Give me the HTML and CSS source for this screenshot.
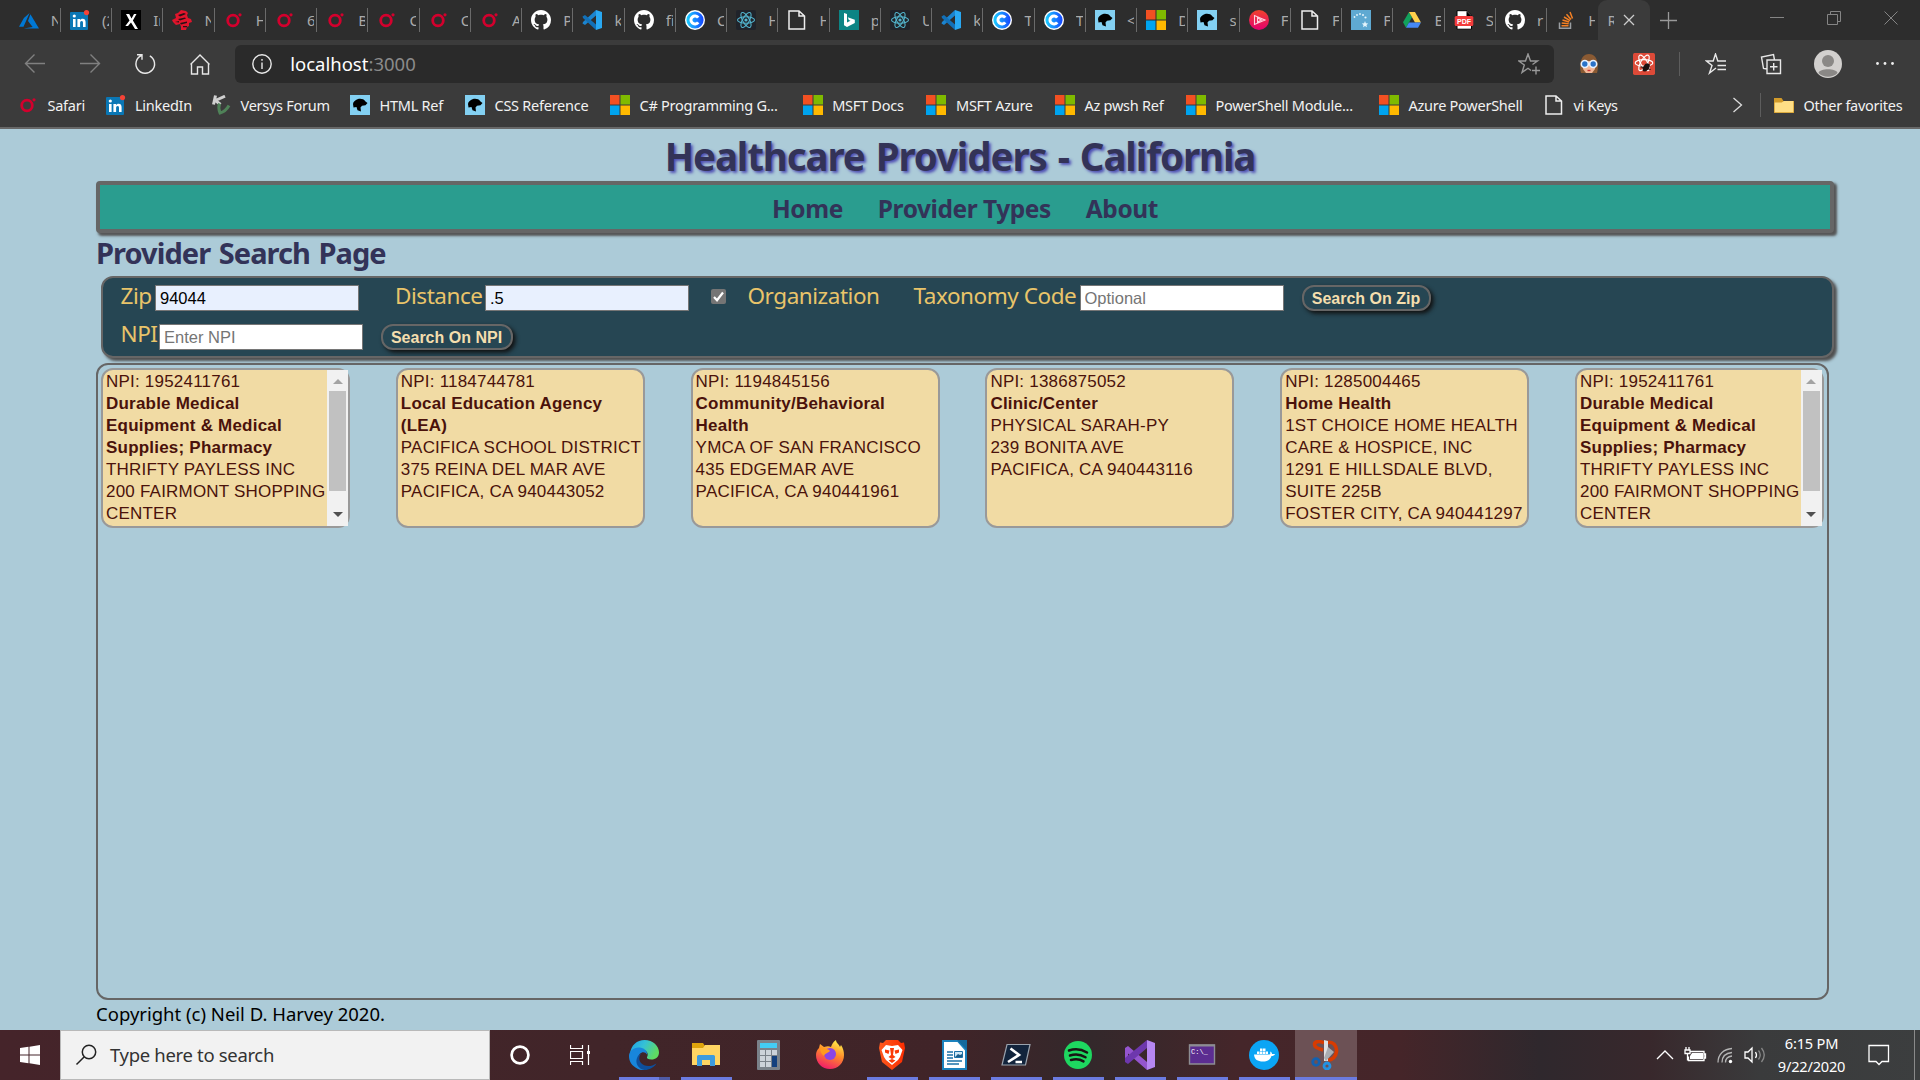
FILE: index.html
```html
<!DOCTYPE html>
<html lang="en">
<head>
<meta charset="utf-8">
<title>Healthcare Providers - California</title>
<link rel="stylesheet" href="styles.css">
</head>
<body>
<svg class="defs" aria-hidden="true">
  <defs>
    <linearGradient id="gc" x1="0" x2="1"><stop offset="0" stop-color="#1bd0ff"/><stop offset="1" stop-color="#1646ff"/></linearGradient>
    <linearGradient id="gp" x1="0" y1="0" x2="0" y2="1"><stop offset="0" stop-color="#f0432c"/><stop offset="1" stop-color="#e3006f"/></linearGradient>
    <linearGradient id="ge" x1="0" y1="0" x2="1" y2=".4"><stop offset="0" stop-color="#1c9ee8"/><stop offset=".5" stop-color="#35c1d6"/><stop offset="1" stop-color="#5fdb62"/></linearGradient>
    <linearGradient id="gf" x1=".7" y1="0" x2=".3" y2="1"><stop offset="0" stop-color="#fff04a"/><stop offset=".45" stop-color="#ff8a2a"/><stop offset="1" stop-color="#f0186c"/></linearGradient>
    <linearGradient id="gb" x1="0" x2="1"><stop offset="0" stop-color="#ff5a1e"/><stop offset="1" stop-color="#fb2c00"/></linearGradient>
  </defs>
  <symbol id="azure" viewBox="0 0 20 20"><path d="M10.6 3 4.9 7.9 0 16.8h4.5zM11.4 4.2 9 11.1l4.6 5.8-8.900 1.500H20z" fill="#0078d4"/></symbol>
  <symbol id="linkedin" viewBox="0 0 20 20"><rect y="2" width="18" height="18" rx="1" fill="#0a77b5"/><g fill="#fff"><rect x="3" y="9" width="2.600" height="8"/><circle cx="4.300" cy="6" r="1.600"/><path d="M7.400 9H10v1.200c.5-.8 1.400-1.400 2.600-1.400 2.300 0 3 1.500 3 3.700V17H13v-4c0-1.200-.3-2-1.300-2-1.100 0-1.600.8-1.600 2v4H7.400z"/></g><circle cx="16.500" cy="2.600" r="2.600" fill="#f44336"/></symbol>
  <symbol id="xk" viewBox="0 0 20 20"><path fill="#000" d="M0 0h20v20H0z"/><path d="M5 4h3.200l2.300 4.500L13 4h2.500l-3.600 6.500L17 19h-3l-4-6.500L7 16H4.300l4.200-5.500z" fill="#fff"/></symbol>
  <symbol id="redfig" viewBox="0 0 20 20"><path d="M3 4l3-1 3-3 5 1 2 2-1 2 1 3 3 1 1 3-3 1v3l-2 1-1 3H9v-3l-1-3-4 1-3-3-1-2 4-2z" fill="#e0152c"/><path d="M6 5l6-2 2 1-6 2.500zM6 9l7-1.500 1 1-6 2zM3 12l4-1v1.500zM8 13l7-1.500v1.500l-6 1.500zM11 16h4v1.300h-4z" fill="#2a1014"/></symbol>
  <symbol id="oreilly" viewBox="0 0 20 20"><circle cx="9" cy="10.500" r="5.300" fill="none" stroke="#d3002d" stroke-width="2.800"/><circle cx="16" cy="4.800" r="1.600" fill="#d3002d"/></symbol>
  <symbol id="github" viewBox="0 0 16 16"><path fill="#fff" d="M8 0C3.580 0 0 3.580 0 8c0 3.540 2.290 6.530 5.470 7.590.4.070.55-.17.55-.38 0-.19-.01-.82-.01-1.490-2.010.37-2.530-.49-2.690-.94-.09-.23-.48-.94-.82-1.130-.28-.15-.68-.52-.01-.53.63-.01 1.080.58 1.230.82.72 1.210 1.870.87 2.330.66.07-.52.28-.87.51-1.070-1.780-.2-3.640-.89-3.640-3.950 0-.87.31-1.590.82-2.150-.08-.2-.36-1.020.08-2.120 0 0 .67-.21 2.200.82.64-.18 1.320-.27 2-.27s1.360.09 2 .27c1.530-1.040 2.200-.82 2.200-.82.44 1.100.16 1.920.08 2.120.51.56.82 1.270.82 2.150 0 3.070-1.870 3.750-3.650 3.950.29.25.54.73.54 1.480 0 1.070-.01 1.930-.01 2.200 0 .21.15.46.55.38A8.010 8.010 0 0 0 16 8c0-4.420-3.580-8-8-8z"/></symbol>
  <symbol id="vscode" viewBox="0 0 20 20"><path d="M14 0l6 2v16l-6 2z" fill="#29a8f2"/><path d="M14 0v5.500L3 15l-2.500-1.500L1 12z" fill="#1b84cf"/><path d="M14 20v-5.500L3 5 .500 6.500 1 8z" fill="#1270b8"/></symbol>
  <symbol id="cc" viewBox="0 0 20 20"><circle cx="10" cy="10" r="10" fill="#fff"/><circle cx="10" cy="10" r="8.600" fill="url(#gc)"/><path d="M13.200 7.700A4 4 0 1 0 13.200 12.300" fill="none" stroke="#fff" stroke-width="3"/></symbol>
  <symbol id="react" viewBox="0 0 20 20"><rect width="20" height="20" rx="2" fill="#20232a"/><g fill="none" stroke="#53b5cf" stroke-width="1.100"><ellipse cx="10" cy="10" rx="8.500" ry="3.300"/><ellipse cx="10" cy="10" rx="8.500" ry="3.300" transform="rotate(60 10 10)"/><ellipse cx="10" cy="10" rx="8.500" ry="3.300" transform="rotate(120 10 10)"/></g><circle cx="10" cy="10" r="1.600" fill="#53b5cf"/></symbol>
  <symbol id="doc" viewBox="0 0 20 20"><path d="M2 1h10l5.500 5v13H2zM12 1v5h5.500" fill="none" stroke="#eee" stroke-width="1.500"/></symbol>
  <symbol id="bing" viewBox="0 0 20 20"><path fill="#0c8484" d="M0 0h20v20H0z"/><path d="M5 3l3 1v8.500l3.500-1.800-1.700-.8-1-2.700 7 2.500v3.200L8 17l-3-1.800z" fill="#fff"/></symbol>
  <symbol id="mdn" viewBox="0 0 20 20"><path fill="#83d0f2" d="M0 0h20v20H0z"/><path d="M3 9c0-2 2-4 5-5 3-.5 6 0 7.500 2.500L17.500 8l-2 2.300-3.500.4-1.500 1.800.5 4-3.500-1.300L6.500 12l-3 .5z" fill="#000"/></symbol>
  <symbol id="ms" viewBox="0 0 20 20"><path fill="#f25022" d="M0 0h9.500v9.500H0z"/><path fill="#7fba00" d="M10.500 0H20v9.500h-9.500z"/><path fill="#00a4ef" d="M0 10.500h9.500V20H0z"/><path fill="#ffb900" d="M10.500 10.500H20V20h-9.500z"/></symbol>
  <symbol id="play" viewBox="0 0 20 20"><circle cx="10" cy="10" r="10" fill="url(#gp)"/><path d="M5.500 5.500v9L16 10zM8.500 8v4l4-2z" fill="none" stroke="#ffd3df" stroke-width="1.100"/></symbol>
  <symbol id="stars" viewBox="0 0 20 20"><path fill="#5fa9d2" d="M0 0h20v20H0z"/><g fill="#e3f3fb"><circle cx="3.500" cy="7" r=".9"/><circle cx="6" cy="5" r=".9"/><circle cx="9" cy="4" r=".9"/><circle cx="12" cy="5" r="1"/><circle cx="14.500" cy="7.500" r="1.100"/><path d="M14 11l.9 2.200 2.300.2-1.700 1.500.5 2.300-2-1.200-2 1.200.5-2.300-1.700-1.500 2.300-.2z"/></g></symbol>
  <symbol id="drive" viewBox="0 0 20 20"><path d="M7 2 10 7.200 4 17.700 1 12.300z" fill="#12a15c"/><path d="M7 2h6l6 10.500h-6z" fill="#ffd04b"/><path d="M7 12.500h12l-3 5.300H4z" fill="#4688f4"/></symbol>
  <symbol id="pdf" viewBox="0 0 20 20"><path d="M3 .7h10l4.500 4.500v14H3z" fill="#fff" stroke="#000"/><path d="M12.500 1v5h5z"/><rect x=".7" y="6" width="18.600" height="10" rx="1.500" fill="#f23b3b"/><text x="10" y="13.800" text-anchor="middle" class="pdf-label">PDF</text></symbol>
  <symbol id="so" viewBox="0 0 20 20"><path d="M3.500 12.500v5.800h11v-5.800" fill="none" stroke="#9a9ea2" stroke-width="1.500"/><path d="M5.500 15.700h7M5.700 13l7 .8M6.500 10l6.700 2M8 7l6 3.600M10.500 4.300l4.500 5.200M14 2l2.500 6.500" stroke="#f48024" stroke-width="1.500"/></symbol>
  <symbol id="versys" viewBox="0 0 20 20"><path d="M4.500.5 2.500 9.500M14 1.200 4.500 5.500 9.500 9.500" fill="none" stroke="#d0d0d0" stroke-width="3"/><path d="M8.500 8.500c-1 3-1 6 .5 9.500C13 17 16 14 18 10.500" fill="none" stroke="#4f8258" stroke-width="3"/></symbol>
  <symbol id="folder" viewBox="0 0 20 20"><path d="M0 3h7.500l2 3H20v12H0z" fill="#d29b2a"/><path d="M.7 7.500h7L10 6h9.300v11.200H.7z" fill="#ffdf86"/></symbol>
</svg>

<header class="browser">
  <div class="tabs">
    <div class="tab"><svg><use href="#azure"/></svg><span>N</span></div>
    <div class="tab"><svg><use href="#linkedin"/></svg><span>(2</span></div>
    <div class="tab"><svg><use href="#xk"/></svg><span>In</span></div>
    <div class="tab"><svg><use href="#redfig"/></svg><span>N</span></div>
    <div class="tab"><svg><use href="#oreilly"/></svg><span>H</span></div>
    <div class="tab"><svg><use href="#oreilly"/></svg><span>6</span></div>
    <div class="tab"><svg><use href="#oreilly"/></svg><span>B</span></div>
    <div class="tab"><svg><use href="#oreilly"/></svg><span>C</span></div>
    <div class="tab"><svg><use href="#oreilly"/></svg><span>C</span></div>
    <div class="tab"><svg><use href="#oreilly"/></svg><span>A</span></div>
    <div class="tab"><svg><use href="#github"/></svg><span>P</span></div>
    <div class="tab"><svg><use href="#vscode"/></svg><span>k</span></div>
    <div class="tab"><svg><use href="#github"/></svg><span>fi</span></div>
    <div class="tab"><svg><use href="#cc"/></svg><span>C</span></div>
    <div class="tab"><svg><use href="#react"/></svg><span>H</span></div>
    <div class="tab"><svg><use href="#doc"/></svg><span>H</span></div>
    <div class="tab"><svg><use href="#bing"/></svg><span>p</span></div>
    <div class="tab"><svg><use href="#react"/></svg><span>U</span></div>
    <div class="tab"><svg><use href="#vscode"/></svg><span>k</span></div>
    <div class="tab"><svg><use href="#cc"/></svg><span>T</span></div>
    <div class="tab"><svg><use href="#cc"/></svg><span>T</span></div>
    <div class="tab"><svg><use href="#mdn"/></svg><span>&lt;</span></div>
    <div class="tab"><svg><use href="#ms"/></svg><span>D</span></div>
    <div class="tab"><svg><use href="#mdn"/></svg><span>s</span></div>
    <div class="tab"><svg><use href="#play"/></svg><span>F</span></div>
    <div class="tab"><svg><use href="#doc"/></svg><span>F</span></div>
    <div class="tab"><svg><use href="#stars"/></svg><span>F</span></div>
    <div class="tab"><svg><use href="#drive"/></svg><span>E</span></div>
    <div class="tab"><svg><use href="#pdf"/></svg><span>S</span></div>
    <div class="tab"><svg><use href="#github"/></svg><span>r</span></div>
    <div class="tab last"><svg><use href="#so"/></svg><span>H</span></div>
    <div class="tab active"><span>R</span><svg viewBox="0 0 12 12"><path d="M1 1l10 10M11 1L1 11"/></svg></div>
    <svg class="new-tab" viewBox="0 0 17 17"><path d="M8.500 0v17M0 8.500h17"/></svg>
    <div class="window-buttons">
      <svg viewBox="0 0 14 14"><path d="M0 6.500h14"/></svg>
      <svg viewBox="0 0 14 14"><path d="M.5 3.500h10v10H.5zM3.500 3V.5h10v10H11"/></svg>
      <svg viewBox="0 0 14 14"><path d="M.5.5l13 13M13.500.5l-13 13"/></svg>
    </div>
  </div>

  <div class="toolbar">
    <svg class="dim" viewBox="0 0 22 22"><path d="M21 10.500H1.500M10.500 1.500l-9 9 9 9"/></svg>
    <svg class="dim" viewBox="0 0 22 22"><path d="M1 10.500h19.500M11.500 1.500l9 9-9 9"/></svg>
    <svg viewBox="0 0 22 22"><path d="M15.800 2.800a9.300 9.300 0 1 1-8.500-.3M3 1.700h5v5"/></svg>
    <svg viewBox="0 0 22 22"><path d="M2.500 10.500V21h6v-7h5v7h6V10.500M1.500 11.500 11 2l9.500 9.500"/></svg>
    <div class="address">
      <svg viewBox="0 0 22 22"><circle cx="11" cy="11" r="9.200"/><path d="M11 9.500v6.500M11 6v1.800"/></svg>
      <span>localhost<i>:3000</i></span>
      <svg class="star" viewBox="0 0 22 22"><path d="M13 17.500 10 15.300 4 19.500 6.300 12 .8 8h6.700L10 1l2.500 7h7L14.500 11.500M18 13.500v8M14 17.500h8"/></svg>
    </div>
    <svg viewBox="0 0 20 22"><path d="M2 20C0 13 1 1 10 1s10 12 8 19z" fill="#8a5a33" stroke="none"/><path d="M4 8h12v8l-3 4H7l-3-4z" fill="#f3b796" stroke="none"/><path d="M4 7c3 0 5-1 6-3 1 2 3 3 6 3" fill="#8a5a33" stroke="none"/><circle cx="5.800" cy="11" r="3.500" fill="#2a72c8" stroke="#e8f2ff" stroke-width="1.600"/><circle cx="14.200" cy="11" r="3.500" fill="#2a72c8" stroke="#e8f2ff" stroke-width="1.600"/><path d="M8.500 17.500h3" stroke="#c33"/></svg>
    <svg viewBox="0 0 20 20"><rect width="20" height="20" rx="1.500" fill="#dd4a38" stroke="none"/><g stroke="#fff" stroke-width="1.100"><ellipse cx="10" cy="9" rx="8" ry="3"/><ellipse cx="10" cy="9" rx="8" ry="3" transform="rotate(60 10 9)"/><ellipse cx="10" cy="9" rx="8" ry="3" transform="rotate(120 10 9)"/></g><ellipse cx="12" cy="13" rx="2.600" ry="4" transform="rotate(35 12 13)" fill="#1c1010" stroke="none"/><path d="M7 12.500l9 2.500M9 16.500l6-6" stroke="#1c1010" stroke-width="1"/></svg>
    <b class="divider"></b>
    <svg viewBox="0 0 22 22"><path d="M11 15 4.500 20 7 12.500 1.500 8h6.700L10.500 1l2.300 7H21M12.500 12.500H21M12.500 16.500H21"/></svg>
    <svg viewBox="0 0 22 22"><path d="M7 7h13.500v13.500H7zM13.700 10v7.500M10 13.700h7.500M7 16l-3.500-.5-2-11.500L13.500 1.500l1 5.500"/></svg>
    <svg class="profile" viewBox="0 0 28 28"><circle cx="14" cy="14" r="14" fill="#d2d0ce" stroke="none"/><circle cx="14" cy="11" r="6" fill="#8a8886" stroke="none"/><path d="M4.500 23c1-5 18-5 19 0a13.800 13.800 0 0 1-19 0z" fill="#8a8886" stroke="none"/></svg>
    <svg viewBox="0 0 22 22"><g fill="#eee" stroke="none"><circle cx="3.500" cy="10.500" r="1.400"/><circle cx="11" cy="10.500" r="1.400"/><circle cx="18.500" cy="10.500" r="1.400"/></g></svg>
  </div>

  <nav class="bookmarks">
    <a><svg><use href="#oreilly"/></svg>Safari</a>
    <a><svg><use href="#linkedin"/></svg>LinkedIn</a>
    <a><svg><use href="#versys"/></svg>Versys Forum</a>
    <a><svg><use href="#mdn"/></svg>HTML Ref</a>
    <a><svg><use href="#mdn"/></svg>CSS Reference</a>
    <a><svg><use href="#ms"/></svg>C# Programming G...</a>
    <a><svg><use href="#ms"/></svg>MSFT Docs</a>
    <a><svg><use href="#ms"/></svg>MSFT Azure</a>
    <a><svg><use href="#ms"/></svg>Az pwsh Ref</a>
    <a><svg><use href="#ms"/></svg>PowerShell Module...</a>
    <a><svg><use href="#ms"/></svg>Azure PowerShell</a>
    <a><svg><use href="#doc"/></svg>vi Keys</a>
    <svg class="more" viewBox="0 0 18 16"><path d="M5.500 1l8 7-8 7"/></svg>
    <b class="divider"></b>
    <a><svg><use href="#folder"/></svg>Other favorites</a>
  </nav>
</header>

<main class="page">
  <h1>Healthcare Providers - California</h1>
  <nav class="site-nav"><a>Home</a><a>Provider Types</a><a>About</a></nav>
  <h2>Provider Search Page</h2>
  <form class="search">
    <div class="row zip-row">
      <label>Zip</label><input class="filled" value="94044">
      <label>Distance</label><input class="filled" value=".5">
      <span class="check"><svg viewBox="0 0 15 15"><path d="M3 8l3 3.200L12 3.500"/></svg></span><label>Organization</label>
      <label>Taxonomy Code</label><input placeholder="Optional">
      <button type="button">Search On Zip</button>
    </div>
    <div class="row npi-row">
      <label>NPI</label><input placeholder="Enter NPI">
      <button type="button">Search On NPI</button>
    </div>
  </form>
  <section class="results">
    <article class="card scrolls"><p>NPI: 1952411761<br><b>Durable Medical<br>Equipment &amp; Medical<br>Supplies; Pharmacy</b><br>THRIFTY PAYLESS INC<br>200 FAIRMONT SHOPPING<br>CENTER</p><div class="scrollbar"><i class="up"></i><i class="thumb"></i><i class="down"></i></div></article>
    <article class="card"><p>NPI: 1184744781<br><b>Local Education Agency<br>(LEA)</b><br>PACIFICA SCHOOL DISTRICT<br>375 REINA DEL MAR AVE<br>PACIFICA, CA 940443052</p></article>
    <article class="card"><p>NPI: 1194845156<br><b>Community/Behavioral<br>Health</b><br>YMCA OF SAN FRANCISCO<br>435 EDGEMAR AVE<br>PACIFICA, CA 940441961</p></article>
    <article class="card"><p>NPI: 1386875052<br><b>Clinic/Center</b><br>PHYSICAL SARAH-PY<br>239 BONITA AVE<br>PACIFICA, CA 940443116</p></article>
    <article class="card"><p>NPI: 1285004465<br><b>Home Health</b><br>1ST CHOICE HOME HEALTH<br>CARE &amp; HOSPICE, INC<br>1291 E HILLSDALE BLVD,<br>SUITE 225B<br>FOSTER CITY, CA 940441297</p></article>
    <article class="card scrolls"><p>NPI: 1952411761<br><b>Durable Medical<br>Equipment &amp; Medical<br>Supplies; Pharmacy</b><br>THRIFTY PAYLESS INC<br>200 FAIRMONT SHOPPING<br>CENTER</p><div class="scrollbar"><i class="up"></i><i class="thumb"></i><i class="down"></i></div></article>
  </section>
  <footer>Copyright (c) Neil D. Harvey 2020.</footer>
</main>

<div class="taskbar">
  <div class="start"><svg viewBox="0 0 20 20"><path d="M0 3l8.500-1.200v7.700H0zM9.500 1.700 20 0v9.500H9.500zM0 10.500h8.500v7.700L0 17zM9.500 10.500H20V20L9.500 18.300z" fill="#fff"/></svg></div>
  <div class="search-box"><svg viewBox="0 0 22 22"><circle cx="14" cy="8" r="6.700"/><path d="M9.300 12.700 1.500 20.500"/></svg><span>Type here to search</span></div>
  <div class="sys"><svg width="20" height="20" viewBox="0 0 20 20"><circle cx="10" cy="10" r="8.400" fill="none" stroke="#fff" stroke-width="2.700"/></svg></div>
  <div class="sys"><svg width="20" height="20" viewBox="0 0 20 20"><path d="M.5 0v3.500h12V0M.5 20v-3.500h12V20M.5 6.500h12v7H.5zM18.500 0v20" fill="none" stroke="#fff" stroke-width="1.200"/><path d="M17 6h3v3h-3z" fill="#fff"/></svg></div>
  <div class="apps">
    <div class="app open multi"><svg viewBox="0 0 30 30"><path d="M1 14C2 5 8 0 15.500 0 24 0 30 6 30 12.500c0 4.500-3.500 7-7.500 7-3.500 0-5-1.300-4.500-2.500 1.500-2 1-6-4-7.500C9 8 3 10 1 14z" fill="url(#ge)"/><path d="M0 16c0-5 5-9 10.500-8.500 5 .4 8 3.800 7.500 7-3-5-10-1-8.500 5 1 5 5 9 9 9.500-3 1.500-7 1.300-10-.3C3 26 0 21.500 0 16z" fill="#1886dc"/><path d="M12 14c-2 2-2.500 6 0 9 3.500 4 10 4 15.500.5C25 27.500 20 30 15.500 30 9 29 6 23 8 18c.8-2 2-3.500 4-4z" fill="#0e4f9c"/></svg></div>
    <div class="app open"><svg viewBox="0 0 30 30"><path d="M1 3h11l2 3v5H1z" fill="#dea40c"/><path d="M1 8h11l2-3h15v20H1z" fill="#ffd563"/><path d="M6 26V16.500q0-1.500 1.500-1.500h15q1.500 0 1.500 1.500V26h-5v-6h-8v6z" fill="#3d9bde"/></svg></div>
    <div class="app"><svg viewBox="0 0 30 30"><rect x="4" width="23" height="30" rx="1" fill="#7a828a"/><path d="M7 3h17v5H7z" fill="#43cdf4"/><path d="M7 10h5v5H7zM13 10h5v5h-5zM19 10h5v5h-5zM7 16h5v5H7zM13 16h5v5h-5zM7 22h5v5H7zM13 22h5v5h-5z" fill="#ccd3da"/><path d="M19 16h5v11h-5z" fill="#13407e"/></svg></div>
    <div class="app"><svg viewBox="0 0 30 30"><path d="M1 15c0-3 1-5 3-7l1-4 4 3c3-1 5-1 7 0 1-3 2-5 5-7 0 3 3 4 4 7l1-2c2 3 3 6 3 10 0 8-6 14-14 14S1 23 1 15z" fill="url(#gf)"/><circle cx="15" cy="14" r="6" fill="#8b45e6"/><path d="M5 7c4 2 8 1 10 4-2 2-5 2-6 5-3-2-4-5-4-9z" fill="#ff9a1e"/></svg></div>
    <div class="app open"><svg viewBox="0 0 30 30"><path d="M9 0h12l3 3 3-.5 1 5.500-3 14-10 8-10-8L2 8l1-5.500L6 3z" fill="url(#gb)"/><path d="M9 5l6 1 6-1 4.500 5L23 17l-2 3-6 5-6-5-2-3-2.500-7z" fill="#fff"/><path d="M8 9.500l4.500 1L11.500 14 8 12.500zM22 9.500l-4.500 1 1 3.500 3.500-1.500zM13 8h4l-1 7 2.500 2-3.500 2-3.500-2 2.500-2zM11.500 20.500l3.500-1.500 3.500 1.500L15 23z" fill="#fb3a08"/></svg></div>
    <div class="app open"><svg viewBox="0 0 30 30"><path d="M4 1h15l8 9v19H4z" fill="#fff" stroke="#1b82bd" stroke-width="2"/><path d="M18 0h10v10z" fill="#14699c"/><path d="M8 12h6M8 15h6M8 18h6M8 21h15M8 24h12" stroke="#1b72a8" stroke-width="1.600"/><path d="M15.500 11.500h8v6h-8z" fill="#cce6f5" stroke="#1b72a8"/><path d="M16 17l3-3 2 1 2-1v3z" fill="#1b5c88"/></svg></div>
    <div class="app open"><svg viewBox="0 0 30 30"><path d="M6 4.500h23L24.500 25H1z" fill="#12243c" stroke="#9aa3ad" stroke-width="1.200"/><path d="M9.500 8.500l8.500 6.500-11 7M14.500 22h6.500" fill="none" stroke="#fff" stroke-width="2.600"/></svg></div>
    <div class="app open"><svg viewBox="0 0 30 30"><circle cx="15" cy="15" r="14" fill="#1ed760"/><path d="M6 10.500c6-2 13-1 18 2M7 15.500c5-1.600 11-1 15.500 1.800M8 20c4.500-1.200 9-.8 12.500 1.400" fill="none" stroke="#191414" stroke-width="2.500" stroke-linecap="round"/></svg></div>
    <div class="app open"><svg viewBox="0 0 30 30"><path d="M0 8l3-2 19 16v8L3 13.500V18l-3 4z" fill="#9455ce"/><path d="M0 22l3 2L22 8V0L0 18z" fill="#6d37ad"/><path d="M22 0l8 3v24l-8 3z" fill="#b687f2"/></svg></div>
    <div class="app open"><svg viewBox="0 0 30 30"><path d="M2.500 5h25v19h-25z" fill="#5c2d91" stroke="#8d8d93" stroke-width="1.400"/><path d="M2 4.500h26v2H2z" fill="#8d8d93"/><text x="4" y="13.500" class="cmd-label">C:\_</text></svg></div>
    <div class="app open"><svg viewBox="0 0 30 30"><circle cx="15" cy="15" r="15" fill="#0ba5f5"/><path d="M5 14.500h15.500c1-.5 1-2 .5-3 1.500.5 2 1.500 2 2.500h3c-.5 1.500-2 2-3.500 2-1.500 4-4 5.500-8.500 5.500-5.500 0-8.500-2-9-7zM8 11.500h2.500V14H8zM11 11.500h2.500V14H11zM14 11.500h2.500V14H14zM11 8.500h2.500V11H11zM14 8.500h2.500V11H14zM17 11.500h2V14h-2z" fill="#fff"/></svg></div>
    <div class="app open current"><svg viewBox="0 0 30 30"><path d="M13 3C8 .5 3.500 1.500 3.500 4.500S8 9 12 10M16 2.500c6-1.500 10 3 9.500 9C25 17 21 20 17 20" fill="none" stroke="#d83b01" stroke-width="3.600"/><path d="M13 0l4 1v20h-4z" fill="#dfe1e3"/><path d="M17 7l6 5-8 9-2-3z" fill="#a9adb1"/><circle cx="5" cy="22" r="3.300" fill="none" stroke="#1361b0" stroke-width="2.800"/><circle cx="16" cy="26" r="3" fill="none" stroke="#2392e3" stroke-width="2.800"/></svg></div>
  </div>
  <div class="tray">
    <svg viewBox="0 0 30 30"><path d="M7 19l8-8 8 8"/></svg>
    <svg viewBox="0 0 30 30"><path d="M10.500 11.500H24v9H8.500v-4M24 14h1.500v4H24M6 7v3M9 7v3M5 10h5v3.500H5zM7.500 13.500v7"/><path d="M12 13h11v6H10v-3z" fill="#fff" stroke="none"/></svg>
    <svg viewBox="0 0 30 30"><path d="M8 22.500C8 14 14 9 22 8.500M12 22.500c0-6 4-9.500 10-10M15.500 22.500c0-4 2.500-6 6.500-6.500" stroke="#b5b5b5"/><circle cx="20.500" cy="21.500" r="1.700" fill="#fff" stroke="none"/></svg>
    <svg viewBox="0 0 30 30"><path d="M5 12h3l4-4v14l-4-4H5zM15.500 12q2 3 0 6"/><path d="M18.500 10.500q3.500 4.500 0 9M21.500 8q5.500 7 0 14" stroke="#888"/></svg>
    <div class="clock">6:15 PM<br>9/22/2020</div>
    <svg class="notify" viewBox="0 0 22 22"><path d="M1 1.500h19.500v16h-6.500l-3 3-3-3H1z"/></svg>
    <b class="peek"></b>
  </div>
</div>
</body>
</html>
```
FILE: styles.css
```css
* { box-sizing: border-box; }

body {
  margin: 0;
  width: 1920px;
  height: 1080px;
  overflow: hidden;
  display: flex;
  flex-direction: column;
  background: #accbd8;
  font-family: "Noto Sans", "Open Sans", sans-serif;
}

.defs { display: block; width: 0; height: 0; flex: none; }

/* Browser chrome */
.browser {
  flex: none;
  height: 129px;
  background: #3b3b3b;
  border-bottom: 2px solid #686868;
  color: #f2f2f2;
}

.tabs {
  height: 40px;
  display: flex;
  align-items: center;
  padding-left: 9.700px;
  background: #2d2d2d;
}

.tab {
  flex: none;
  width: 51.250px;
  height: 24px;
  display: flex;
  align-items: center;
  gap: 12px;
  padding-left: 9px;
  border-right: 1px solid #6a6a6a;
  overflow: hidden;
}

.tab svg { flex: none; width: 20px; height: 20px; }

.tab span {
  width: 7px;
  overflow: hidden;
  white-space: nowrap;
  font-size: 15px;
  line-height: 24px;
  color: #aaa;
}

.tab.last { border-right-color: transparent; }

.tab.active {
  height: 40px;
  border: 0;
  border-radius: 9px 9px 0 0;
  background: #3b3b3b;
  gap: 9px;
}

.tab.active svg {
  width: 12px;
  height: 12px;
  fill: none;
  stroke: #ccc;
  stroke-width: 1.300;
}

.new-tab {
  width: 17px;
  height: 17px;
  margin-left: 10px;
  stroke: #999;
  stroke-width: 1.300;
}

.window-buttons {
  margin-left: auto;
  padding: 0 22px 4px 0;
  display: flex;
  gap: 43px;
}

.window-buttons svg { width: 14px; height: 14px; fill: none; stroke: #858585; }

.toolbar {
  height: 48px;
  padding-left: 7.500px;
  display: grid;
  grid-template-columns: repeat(4, 55px) 1334px 55px 55px 16px 56px 55px 58px 57px;
  align-items: center;
  justify-items: center;
}

.toolbar svg {
  width: 22px;
  height: 22px;
  fill: none;
  stroke: #e8e8e8;
  stroke-width: 1.400;
}

.toolbar .dim { stroke: #808080; }
.toolbar .profile { width: 28px; height: 28px; }

.address {
  width: 1318.500px;
  height: 38px;
  padding: 0 14px 0 16px;
  display: flex;
  align-items: center;
  border-radius: 6px;
  background: #2a2a2a;
  font-size: 18.500px;
  color: #fff;
}

.address span { margin-left: 17px; line-height: 24px; }
.address i { font-style: normal; color: #8b8b8b; }
.address .star { margin-left: auto; stroke: #999; }

.divider { width: 1px; height: 24px; background: #5d5d5d; }

.bookmarks {
  height: 33px;
  padding-left: 18px;
  display: grid;
  grid-template-columns: 87.500px 105.500px 139px 115px 145px 192.700px 123.800px 128.500px 131px 193px 165px 184px 32px 14px auto;
  align-items: center;
  font-size: 14.500px;
  letter-spacing: -0.260px;
}

.bookmarks a {
  display: flex;
  align-items: center;
  gap: 9.500px;
  white-space: nowrap;
  line-height: 20px;
}

.bookmarks a svg { flex: none; width: 20px; height: 20px; }
.bookmarks .more { width: 18px; height: 16px; fill: none; stroke: #ddd; stroke-width: 1.300; }

/* Site */
.page { flex: none; height: 901px; padding-left: 96px; }

h1, h2 { margin: 0; color: #333358; white-space: nowrap; }

h1 {
  height: 52px;
  margin-right: 96px;
  text-align: center;
  font-size: 38.500px;
  line-height: 55px;
  letter-spacing: -1.100px;
  word-spacing: 2px;
  text-shadow: 2px 2px 3px #5050b4;
}

.site-nav {
  width: 1738px;
  height: 52px;
  display: flex;
  justify-content: center;
  gap: 35px;
  border: 4px solid #666;
  border-radius: 4px;
  background: #2a9d8f;
  box-shadow: 2.500px 2.500px 2.500px #555;
  font-size: 24.500px;
  font-weight: 700;
  line-height: 48px;
  letter-spacing: -0.450px;
  color: #333358;
}

h2 { height: 43px; font-size: 29px; line-height: 40px; letter-spacing: -0.950px; word-spacing: 2px; }

.search {
  width: 1733px;
  height: 82px;
  margin-left: 5px;
  padding: 7px 0 0 17.500px;
  display: flex;
  flex-direction: column;
  gap: 13px;
  border: 2px solid #666;
  border-radius: 12px;
  background: #264653;
  box-shadow: 3px 3px 3px #505050;
}

.row { display: grid; height: 26px; align-items: start; }
.zip-row { grid-template-columns: 34.500px 240px 90px 225.500px 37px 166px 166px 222px 129px; }
.npi-row { grid-template-columns: 38.500px 221.500px 132px; }

.row label {
  font-size: 22.500px;
  line-height: 21px;
  letter-spacing: -0.450px;
  color: #e9c46a;
  white-space: nowrap;
}

.npi-row label { line-height: 19px; }

.row input {
  width: 204px;
  height: 26px;
  margin: 0;
  padding: 0 4px;
  border: 1px solid #767676;
  background: #fff;
  font: 16.500px "Liberation Sans", Arial, sans-serif;
  color: #000;
}

.row input.filled { background: #e8f0fe; }
.row input::placeholder { color: #757575; }

.check { width: 15px; height: 15px; margin-top: 4px; border-radius: 2px; background: #757575; }
.check svg { display: block; width: 15px; height: 15px; fill: none; stroke: #fff; stroke-width: 2.200; }

.row button {
  height: 26px;
  padding: 0;
  border: 2px solid #666;
  border-radius: 12px;
  background: #264653;
  box-shadow: 2.500px 2.500px 4px #111;
  font: 700 16px/24px "Liberation Sans", Arial, sans-serif;
  color: #f4deae;
}

.results {
  width: 1733px;
  height: 637px;
  margin-top: 5px;
  padding: 3px 3px 0 3px;
  display: grid;
  grid-template-columns: repeat(6, 249px);
  justify-content: space-between;
  align-items: start;
  border: 2px solid #666;
  border-radius: 12px;
}

.card {
  height: 160px;
  display: flex;
  border: 2px solid #999;
  border-radius: 12px;
  background: #f1dba4;
}

.card p {
  flex: 1;
  margin: 0;
  padding: 1px 0 0 3px;
  font: 17px/22px "Liberation Sans", Arial, sans-serif;
  letter-spacing: 0.210px;
  white-space: nowrap;
  color: #4a120b;
}

.scrollbar {
  flex: none;
  width: 21px;
  height: 156px;
  display: flex;
  flex-direction: column;
  align-items: center;
  background: #f1f1f1;
}

.scrollbar .up { margin-top: 9px; border: 5px solid transparent; border-top: 0; border-bottom-color: #a3a3a3; }
.scrollbar .thumb { margin-top: 7px; width: 17px; height: 100px; background: #c1c1c1; }
.scrollbar .down { margin-top: auto; margin-bottom: 9px; border: 5px solid transparent; border-bottom: 0; border-top-color: #505050; }

footer { font-size: 18.500px; line-height: 27px; color: #000; }

/* Desktop taskbar */
.taskbar {
  flex: none;
  height: 50px;
  display: flex;
  background: linear-gradient(90deg, #45242a 0, #412529 600px, #402428 950px, #33282b 1090px, #45262a 1240px, #452529 1400px, #2f282d 1540px, #38282c 1650px, #3a3b3c 1760px, #3c3e3f 1920px);
  color: #fff;
}

.start, .sys { width: 60px; display: grid; place-items: center; }
.start svg { width: 20px; height: 20px; }

.search-box {
  width: 429.500px;
  padding-left: 14px;
  display: flex;
  align-items: center;
  gap: 13px;
  border: 1px solid #b9b9b9;
  background: #f2f2f2;
  font-size: 18.500px;
  letter-spacing: -0.330px;
  color: #333;
}

.search-box span { padding-bottom: 2px; }
.search-box svg { width: 22px; height: 22px; fill: none; stroke: #222; stroke-width: 1.500; }

.apps { display: flex; margin-left: 3.500px; }

.app {
  width: 62px;
  display: flex;
  flex-direction: column;
  align-items: center;
  padding-top: 10px;
}

.app svg { width: 30px; height: 30px; }
.app.open::after { content: ""; width: 51px; height: 3px; margin-top: auto; background: #6b7be0; }
.app.multi::after { background: linear-gradient(90deg, #6b7be0 40px, #4f5ba6 40px); }
.app.current { background: #6c5155; }
.app.current::after { width: 100%; }

.tray { margin-left: auto; display: flex; align-items: center; }
.tray svg { width: 30px; height: 30px; fill: none; stroke: #fff; stroke-width: 1.300; }
.clock { width: 83px; font-size: 14.600px; line-height: 23px; letter-spacing: -0.200px; text-align: center; }
.tray .notify { width: 22px; height: 22px; margin: 0 34px 0 15px; }
.peek { width: 6px; height: 50px; margin-left: -10px; border-left: 1px solid #8a8a8a; }

.pdf-label { font: 700 7px "Liberation Sans", Arial, sans-serif; fill: #fff; }
.cmd-label { font: 7px "Liberation Mono", monospace; fill: #fff; }
```
